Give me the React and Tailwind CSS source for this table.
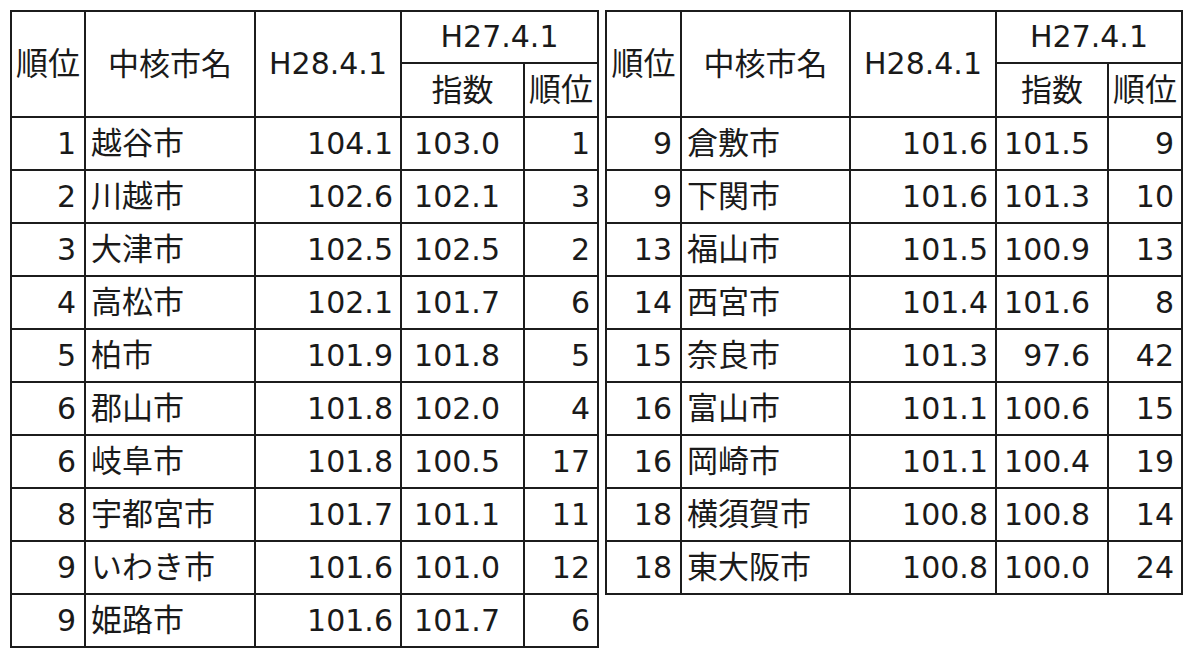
import React from "react";

const left = [
  ["1", "越谷市", "104.1", "103.0", "1"],
  ["2", "川越市", "102.6", "102.1", "3"],
  ["3", "大津市", "102.5", "102.5", "2"],
  ["4", "高松市", "102.1", "101.7", "6"],
  ["5", "柏市", "101.9", "101.8", "5"],
  ["6", "郡山市", "101.8", "102.0", "4"],
  ["6", "岐阜市", "101.8", "100.5", "17"],
  ["8", "宇都宮市", "101.7", "101.1", "11"],
  ["9", "いわき市", "101.6", "101.0", "12"],
  ["9", "姫路市", "101.6", "101.7", "6"],
];

const right = [
  ["9", "倉敷市", "101.6", "101.5", "9"],
  ["9", "下関市", "101.6", "101.3", "10"],
  ["13", "福山市", "101.5", "100.9", "13"],
  ["14", "西宮市", "101.4", "101.6", "8"],
  ["15", "奈良市", "101.3", "97.6", "42"],
  ["16", "富山市", "101.1", "100.6", "15"],
  ["16", "岡崎市", "101.1", "100.4", "19"],
  ["18", "横須賀市", "100.8", "100.8", "14"],
  ["18", "東大阪市", "100.8", "100.0", "24"],
];

function Table({ rows, cols, idxPad }) {
  return (
    <div
      className="grid gap-[2px] bg-[#1c1c1c] p-[2px] self-start"
      style={{ gridTemplateColumns: cols, gridTemplateRows: `50px 52px repeat(${rows.length}, 51px)` }}
    >
      <div className="row-span-2 bg-white flex items-center justify-center text-[32px]">順位</div>
      <div className="row-span-2 bg-white flex items-center justify-center text-[31px]">中核市名</div>
      <div className="row-span-2 bg-white flex items-center justify-center">H28.4.1</div>
      <div className="col-span-2 bg-white flex items-center justify-center">H27.4.1</div>
      <div className="bg-white flex items-center justify-center text-[31px]">指数</div>
      <div className="bg-white flex items-center justify-center text-[32px]">順位</div>
      {rows.map((r, i) => (
        <React.Fragment key={i}>
          <div className="bg-white flex items-center justify-end pr-[8px]">{r[0]}</div>
          <div className="bg-white flex items-center justify-start pl-[5px] text-[31px]">{r[1]}</div>
          <div className="bg-white flex items-center justify-end pr-[7px]">{r[2]}</div>
          <div className={`bg-white flex items-center justify-end ${idxPad}`}>{r[3]}</div>
          <div className="bg-white flex items-center justify-end pr-[7px]">{r[4]}</div>
        </React.Fragment>
      ))}
    </div>
  );
}

export default function App() {
  return (
    <div
      className="w-[1200px] h-[665px] bg-white text-[#1a1a1a] text-[30px] leading-none flex items-start gap-[6px] pl-[10px] pt-[10px] overflow-hidden"
      style={{ fontFamily: '"DejaVu Sans", "Noto Sans CJK JP", sans-serif' }}
    >
      <Table rows={left} cols="72px 168px 144px 121px 72px" idxPad="pr-[23px]" />
      <Table rows={right} cols="73px 167px 144px 110px 72px" idxPad="pr-[17px]" />
    </div>
  );
}
